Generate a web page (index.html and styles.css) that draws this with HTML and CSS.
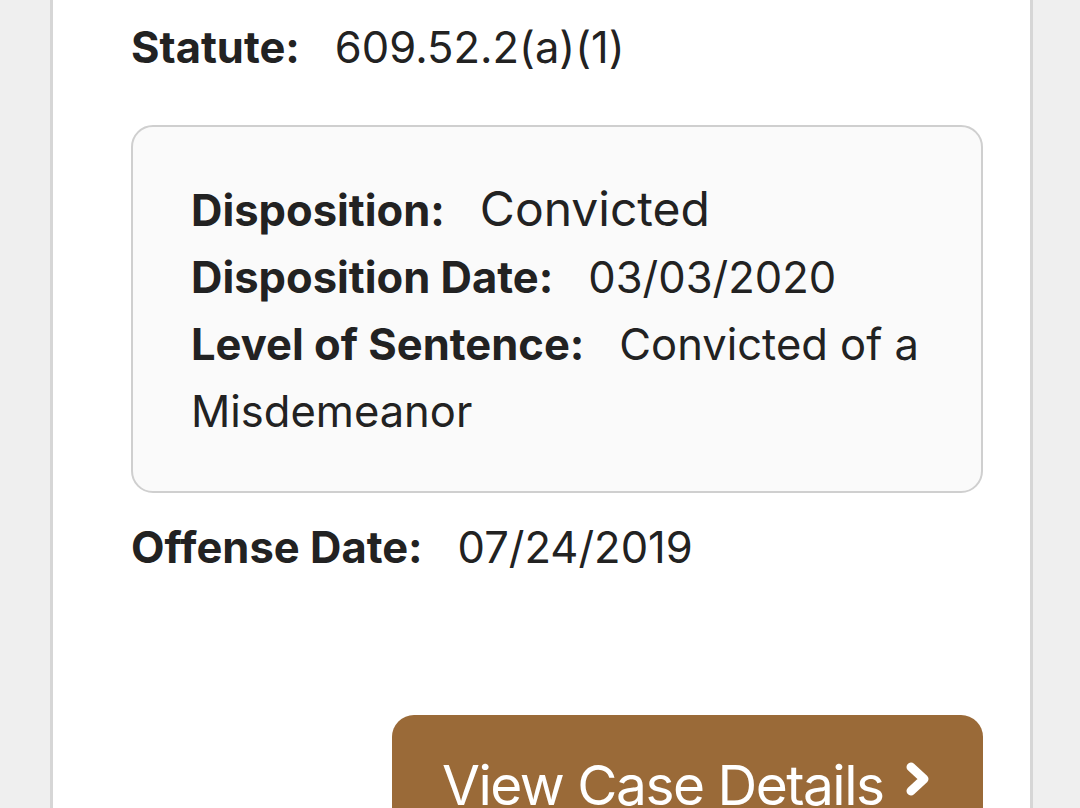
FILE: index.html
```html
<!DOCTYPE html>
<html>
<head>
<meta charset="utf-8">
<link rel="stylesheet" href="styles.css">
</head>
<body>
<main class="card">
  <div class="row"><span class="label">Statute:</span><span class="value">609.52.2(a)(1)</span></div>
  <section class="dispo">
    <div class="row"><span class="label">Disposition:</span><span class="value value-lg">Convicted</span></div>
    <div class="row"><span class="label">Disposition Date:</span><span class="value">03/03/2020</span></div>
    <div class="row"><span class="label">Level of Sentence:</span><span class="value">Convicted of a</span> <span class="value">Misdemeanor</span></div>
  </section>
  <div class="row"><span class="label">Offense Date:</span><span class="value">07/24/2019</span></div>
  <div class="actions">
    <a class="btn" href="#"><span class="btn-text">View Case Details</span>
      <svg class="chev" width="28" height="36" viewBox="0 0 28 36"><path d="M7 6 L20 18 L7 30" fill="none" stroke="#fff" stroke-width="9" stroke-linecap="round" stroke-linejoin="round"/></svg>
    </a>
  </div>
</main>
</body>
</html>
```

FILE: styles.css
```css
html, body {
  margin: 0;
  padding: 0;
  background: #efefef;
  height: 808px;
  overflow: hidden;
}
body {
  font-family: Inter, "Noto Sans", sans-serif;
  color: #222;
}
.card {
  margin: 0 47px 0 50px;
  border-left: 3px solid #d6d6d6;
  border-right: 3px solid #d6d6d6;
  background: #fff;
  padding: 14px 47px 0 78px;
  min-height: 808px;
  box-sizing: border-box;
}
.row {
  font-size: 43.5px;
  line-height: 67px;
}
.label {
  font-weight: 700;
  margin-right: 35px;
}
.value {
  font-weight: 400;
}
.value-lg {
  font-size: 48px;
  line-height: 1;
}
.dispo {
  margin: 44px 0 21px;
  border: 2px solid #cfcfcf;
  border-radius: 22px;
  background: #fafafa;
  padding: 50px 58px 46px;
}
.actions {
  display: flex;
  justify-content: flex-end;
  margin-top: 134px;
}
.btn {
  display: flex;
  align-items: flex-start;
  width: 591px;
  box-sizing: border-box;
  height: 140px;
  padding: 40px 50px 0;
  background: #9a6a38;
  border-radius: 22px;
  color: #fff;
  text-decoration: none;
  gap: 20px;
}
.btn-text {
  font-size: 55px;
  line-height: 60px;
  letter-spacing: -1.5px;
  white-space: nowrap;
}
.chev {
  margin-top: 6px;
  flex: none;
}
```
